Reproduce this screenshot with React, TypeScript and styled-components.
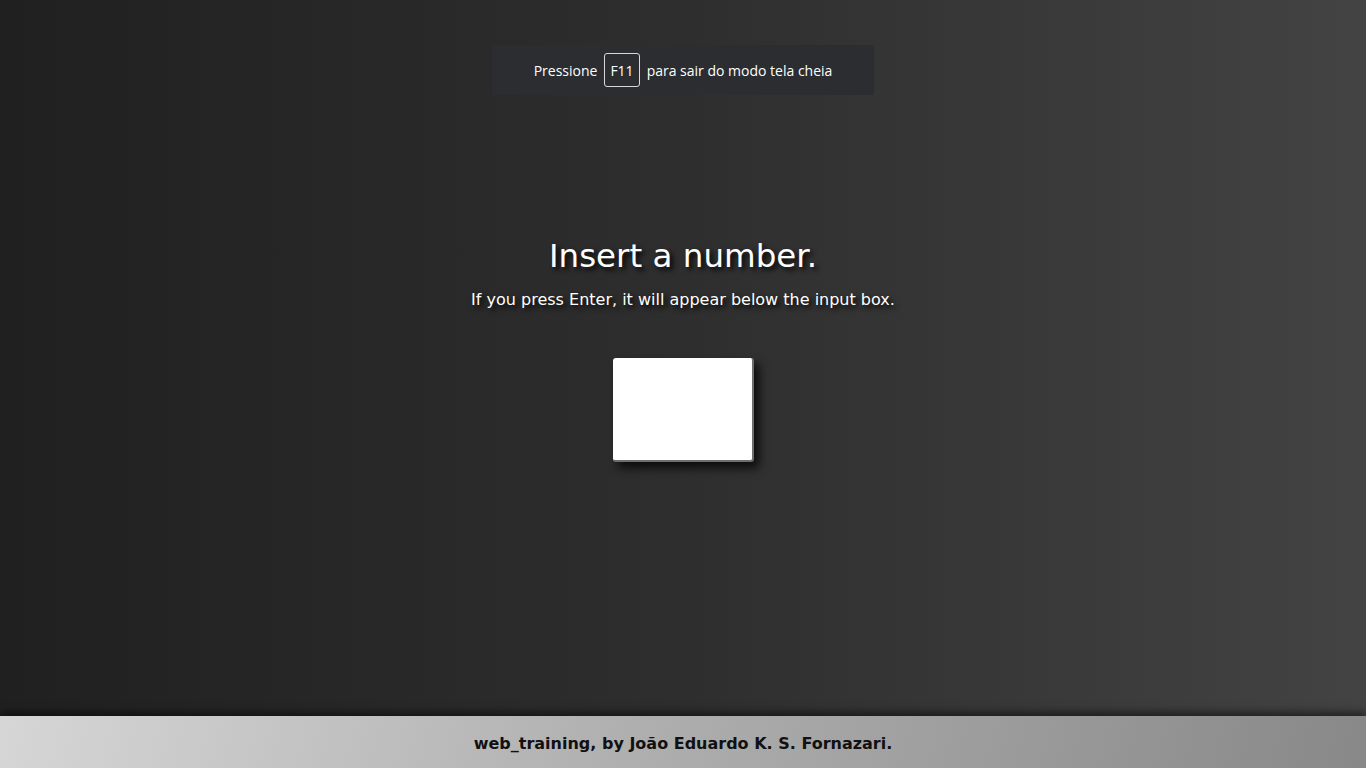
import React from "react";
import styled, { createGlobalStyle } from "styled-components";

const Global = createGlobalStyle`
  html, body { margin: 0; padding: 0; height: 100%; }
  body {
    background: linear-gradient(to right, #202020 0%, #2e2e2e 50%, #434343 100%);
    font-family: "DejaVu Sans", Verdana, sans-serif;
    overflow: hidden;
  }
  #root { height: 100%; }
`;

const Page = styled.div`
  display: flex;
  flex-direction: column;
  height: 100vh;
`;

const Main = styled.main`
  flex: 1;
  display: flex;
  flex-direction: column;
  align-items: center;
  padding-top: 236px;
`;

const Title = styled.h1`
  margin: 0;
  font-size: 32.5px;
  font-weight: normal;
  color: #ffffff;
  line-height: 40px;
  text-shadow: 3px 3px 5px rgba(0, 0, 0, 0.95);
`;

const Subtitle = styled.p`
  margin: 12px 0 0;
  font-size: 16px;
  color: #ffffff;
  line-height: 24px;
  text-shadow: 3px 3px 5px rgba(0, 0, 0, 0.95);
`;

const NumberInput = styled.input`
  margin-top: 46px;
  width: 141px;
  height: 104px;
  box-sizing: border-box;
  background: #ffffff;
  border: none;
  border-right: 2px solid #6e6e6e;
  border-bottom: 2px solid #6e6e6e;
  border-radius: 3px;
  box-shadow: 5px 6px 10px rgba(0, 0, 0, 0.75);
  outline: none;
  font-size: 24px;
  text-align: center;
`;

const Footer = styled.footer`
  height: 52px;
  flex-shrink: 0;
  display: flex;
  align-items: center;
  justify-content: center;
  background: linear-gradient(105deg, #d6d6d6 0%, #b0b0b0 45%, #888888 100%);
  box-shadow: 0 -4px 8px rgba(0, 0, 0, 0.5);
  font-weight: bold;
  font-size: 16px;
  color: #111111;
  padding-top: 2px;
  box-sizing: border-box;
`;

const Toast = styled.div`
  position: absolute;
  top: 45px;
  left: 492px;
  width: 382px;
  height: 50px;
  background: #2b2d31;
  display: flex;
  align-items: center;
  justify-content: center;
  gap: 7px;
  font-family: "Open Sans", "Noto Sans", sans-serif;
  font-size: 14px;
  color: #ffffff;
`;

const Key = styled.span`
  display: inline-flex;
  align-items: center;
  justify-content: center;
  height: 34px;
  padding: 0 5px;
  box-sizing: border-box;
  border: 1px solid #d8d8d8;
  border-radius: 3px;
`;

export default function App() {
  return (
    <>
      <Global />
      <Page>
        <Main>
          <Title>Insert a number.</Title>
          <Subtitle>If you press Enter, it will appear below the input box.</Subtitle>
          <NumberInput type="text" />
        </Main>
        <Footer>web_training, by João Eduardo K. S. Fornazari.</Footer>
      </Page>
      <Toast>
        <span>Pressione</span>
        <Key>F11</Key>
        <span>para sair do modo tela cheia</span>
      </Toast>
    </>
  );
}
